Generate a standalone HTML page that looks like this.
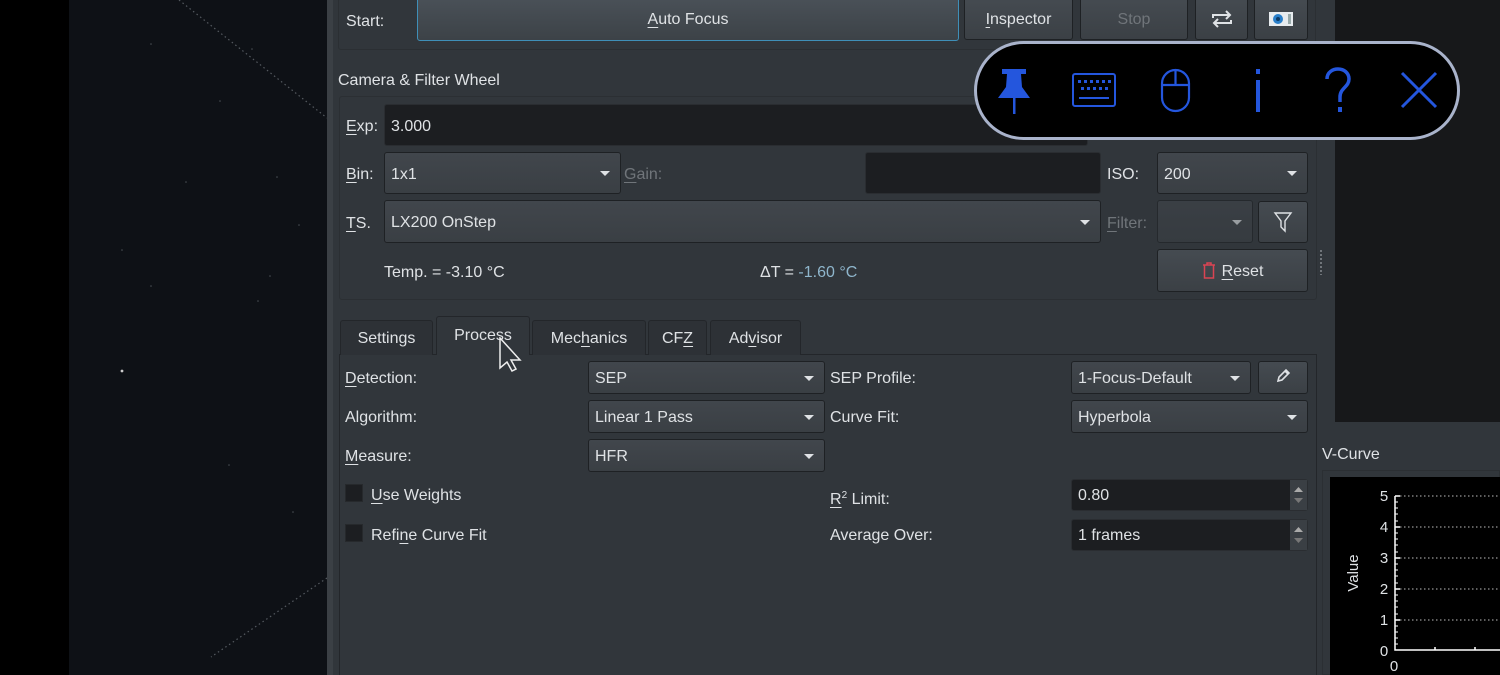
<!DOCTYPE html>
<html><head><meta charset="utf-8"><style>
*{box-sizing:border-box;margin:0;padding:0}
html,body{width:1500px;height:675px;overflow:hidden}
body{background:#000;font-family:"Liberation Sans",sans-serif;font-size:16px;color:#dfe2e5;position:relative}
.a{position:absolute}
.t{position:absolute;line-height:20px;white-space:nowrap;padding-top:2px}
.btn{position:absolute;border:1px solid #1e2124;border-radius:3px;background:linear-gradient(#454b51,#3b4045);text-align:center;line-height:44px}
.cb{position:absolute;border:1px solid #1e2124;border-radius:3px;background:linear-gradient(#41464c,#3a3f44);padding-left:6px;line-height:33px}
.cb::after{content:"";position:absolute;right:10px;top:50%;margin-top:-2px;border-left:5px solid transparent;border-right:5px solid transparent;border-top:5px solid #dfe2e5}
.in{position:absolute;background:#1c1e21;border:1px solid #2a2d31;border-radius:3px;padding-left:6px}
.u{text-decoration:underline;text-underline-offset:3px}
.dis{color:#70757a}
.tab{position:absolute;top:320px;height:35px;border:1px solid #23262a;border-bottom:none;border-radius:3px 3px 0 0;background:#2d3136;text-align:center;line-height:36px}
.chk{position:absolute;width:18px;height:18px;background:#1c1e21;border:1px solid #26292c}
</style></head><body>
<div class="a" style="left:69px;top:0;width:258px;height:675px;background:#0e1116"></div>
<svg class="a" style="left:69px;top:0" width="258" height="675">
<line x1="110" y1="0" x2="258" y2="118" stroke="#555a60" stroke-width="1.2" stroke-dasharray="1.5 3"/>
<line x1="258" y1="443" x2="142" y2="522" stroke="#555a60" stroke-width="1.2" stroke-dasharray="1.5 3" transform="translate(0,135)"/>
<g fill="#4a4f55"><circle cx="82" cy="44" r="0.8"/><circle cx="151" cy="101" r="0.8"/><circle cx="117" cy="182" r="0.8"/><circle cx="208" cy="177" r="0.8"/><circle cx="230" cy="225" r="0.8"/><circle cx="53" cy="250" r="0.8"/><circle cx="82" cy="286" r="0.8"/><circle cx="201" cy="276" r="0.8"/><circle cx="189" cy="301" r="0.8"/><circle cx="160" cy="465" r="0.8"/><circle cx="224" cy="512" r="0.8"/><circle cx="183" cy="49" r="0.8"/></g>
<circle cx="53" cy="371" r="1.4" fill="#ccc"/>
</svg>
<div class="a" style="left:327px;top:0;width:1008px;height:675px;background:#31363b"></div>
<div class="a" style="left:327px;top:0;width:6px;height:675px;background:#3b4045"></div>
<div class="a" style="left:1335px;top:0;width:165px;height:422px;background:#17181a"></div>
<div class="a" style="left:1316px;top:422px;width:184px;height:253px;background:#31363b"></div>

<div class="a" style="left:338px;top:-2px;width:978px;height:52px;border:1px solid #2b2f33;border-radius:3px"></div>
<div class="t" style="left:346px;top:10px">Start:</div>
<div class="btn" style="left:417px;top:-3px;width:542px;height:44px;border:1px solid #3f8fb8;background:linear-gradient(#4a5158,#3c4247)"><span class="u">A</span>uto Focus</div>
<div class="btn" style="left:964px;top:-3px;width:109px;height:43px"><span class="u">I</span>nspector</div>
<div class="btn dis" style="left:1080px;top:-3px;width:108px;height:43px">Stop</div>
<div class="btn" style="left:1195px;top:-3px;width:53px;height:43px"><svg width="26" height="20" viewBox="0 0 26 20" style="margin-top:11px;vertical-align:top"><path d="M4 9V6h17M17 2l4 4-4 4M22 11v3H5M9 18l-4-4 4-4" fill="none" stroke="#dfe2e5" stroke-width="2"/></svg></div>
<div class="btn" style="left:1254px;top:-3px;width:54px;height:43px"><svg width="26" height="18" viewBox="0 0 26 18" style="margin-top:12px;vertical-align:top"><rect x="1" y="2" width="24" height="14" fill="#e8ecef"/><circle cx="10" cy="9" r="5" fill="#2a7fc9"/><circle cx="10" cy="9" r="2" fill="#0b3a66"/><rect x="20" y="4" width="3" height="10" fill="#9aa"/></svg></div>

<div class="t" style="left:338px;top:69px">Camera &amp; Filter Wheel</div>
<div class="a" style="left:339px;top:96px;width:978px;height:204px;border:1px solid #2b2f33;border-radius:3px"></div>
<div class="t" style="left:346px;top:115px"><span class="u">E</span>xp:</div>
<div class="in" style="left:384px;top:104px;width:704px;height:42px;line-height:43px">3.000</div>
<div class="t" style="left:346px;top:163px"><span class="u">B</span>in:</div>
<div class="cb" style="left:384px;top:152px;width:237px;height:42px;line-height:43px">1x1</div>
<div class="t dis" style="left:624px;top:163px"><span class="u">G</span>ain:</div>
<div class="in" style="left:865px;top:152px;width:236px;height:42px"></div>
<div class="t" style="left:1107px;top:163px">ISO:</div>
<div class="cb" style="left:1157px;top:152px;width:151px;height:42px;line-height:43px">200</div>
<div class="t" style="left:346px;top:212px"><span class="u">T</span>S.</div>
<div class="cb" style="left:384px;top:200px;width:717px;height:43px;line-height:44px">LX200 OnStep</div>
<div class="t dis" style="left:1107px;top:212px"><span class="u">F</span>ilter:</div>
<div class="cb" style="left:1157px;top:200px;width:96px;height:43px;opacity:.6"></div>
<div class="btn" style="left:1258px;top:201px;width:50px;height:42px"><svg width="20" height="22" viewBox="0 0 20 22" style="margin-top:9px;vertical-align:top"><path d="M2 2h16l-6 8v10l-4-4v-6z" fill="none" stroke="#dfe2e5" stroke-width="1.4"/></svg></div>
<div class="t" style="left:384px;top:261px">Temp. = -3.10 °C</div>
<div class="t" style="left:760px;top:261px">ΔT = <span style="color:#8fb6cc">-1.60 °C</span></div>
<div class="btn" style="left:1157px;top:249px;width:151px;height:43px"><svg width="14" height="18" viewBox="0 0 14 18" style="vertical-align:-3px;margin-right:6px"><path d="M1 4h12M5 4V2h4v2M2.5 4v13h9V4" fill="none" stroke="#da4453" stroke-width="1.5"/></svg><span class="u">R</span>eset</div>
<div class="a" style="left:1320px;top:250px;width:2px;height:25px;background:repeating-linear-gradient(#70757a 0 2px,transparent 2px 4px)"></div>

<div class="a" style="left:339px;top:354px;width:978px;height:321px;border:1px solid #23262a;border-bottom:none;background:#31363b"></div>
<div class="tab" style="left:340px;width:93px">Settings</div>
<div class="tab" style="left:436px;top:316px;width:94px;height:39px;background:#31363b;line-height:38px">Process</div>
<div class="tab" style="left:532px;width:114px">Mec<span class="u">h</span>anics</div>
<div class="tab" style="left:648px;width:59px">CF<span class="u">Z</span></div>
<div class="tab" style="left:710px;width:91px">Ad<span class="u">v</span>isor</div>
<svg class="a" style="left:498px;top:337px" width="26" height="38" viewBox="0 0 26 38"><path d="M2 1v30l7-6 5 9 4-2-5-9h9z" fill="#31363b" stroke="#eee" stroke-width="1.5"/></svg>

<div class="t" style="left:345px;top:367px"><span class="u">D</span>etection:</div>
<div class="cb" style="left:588px;top:361px;width:237px;height:33px">SEP</div>
<div class="t" style="left:830px;top:367px">SEP Profile:</div>
<div class="cb" style="left:1071px;top:361px;width:180px;height:33px">1-Focus-Default</div>
<div class="btn" style="left:1258px;top:361px;width:50px;height:33px;line-height:30px"><svg width="16" height="16" viewBox="0 0 16 16" style="vertical-align:-3px"><path d="M3 13l1-4 7-7 3 3-7 7zM10 3l3 3" fill="none" stroke="#dfe2e5" stroke-width="1.6"/></svg></div>
<div class="t" style="left:345px;top:406px">Algorithm:</div>
<div class="cb" style="left:588px;top:400px;width:237px;height:33px">Linear 1 Pass</div>
<div class="t" style="left:830px;top:406px">Curve Fit:</div>
<div class="cb" style="left:1071px;top:400px;width:237px;height:33px">Hyperbola</div>
<div class="t" style="left:345px;top:445px"><span class="u">M</span>easure:</div>
<div class="cb" style="left:588px;top:439px;width:237px;height:33px">HFR</div>
<div class="chk" style="left:345px;top:484px"></div>
<div class="t" style="left:371px;top:484px"><span class="u">U</span>se Weights</div>
<div class="t" style="left:830px;top:484px"><span class="u">R</span><span style="font-size:10px;vertical-align:6px">2</span> Limit:</div>
<div class="in" style="left:1071px;top:479px;width:237px;height:32px;line-height:32px">0.80</div>
<div class="chk" style="left:345px;top:524px"></div>
<div class="t" style="left:371px;top:524px">Refi<span class="u">n</span>e Curve Fit</div>
<div class="t" style="left:830px;top:524px">Average Over:</div>
<div class="in" style="left:1071px;top:519px;width:237px;height:32px;line-height:32px">1 frames</div>
<svg class="a" style="left:1290px;top:480px" width="17" height="30"><rect width="17" height="30" fill="#3a3f44"/><path d="M4 12l4.5-5 4.5 5z" fill="#aaa"/><path d="M4 18l4.5 5 4.5-5z" fill="#777"/></svg>
<svg class="a" style="left:1290px;top:520px" width="17" height="30"><rect width="17" height="30" fill="#3a3f44"/><path d="M4 12l4.5-5 4.5 5z" fill="#aaa"/><path d="M4 18l4.5 5 4.5-5z" fill="#777"/></svg>

<div class="t" style="left:1322px;top:443px">V-Curve</div>
<div class="a" style="left:1322px;top:470px;width:178px;height:205px;border:1px solid #2b2f33"></div>
<svg class="a" style="left:1330px;top:477px" width="170" height="198">
<rect width="170" height="198" fill="#000"/>
<text x="28" y="96" fill="#dfe2e5" font-size="15" font-family="Liberation Sans" transform="rotate(-90 28 96)" text-anchor="middle">Value</text>
<g fill="#dfe2e5" font-size="15" font-family="Liberation Sans" text-anchor="middle">
<text x="54" y="24">5</text><text x="54" y="55">4</text><text x="54" y="86">3</text><text x="54" y="117">2</text><text x="54" y="148">1</text><text x="54" y="179">0</text><text x="64" y="194">0</text></g>
<path d="M65 19V173H170" stroke="#fff" stroke-width="1.5" fill="none"/>
<g stroke="#bbb" stroke-dasharray="1.5 2.5"><line x1="66" y1="19" x2="170" y2="19"/><line x1="66" y1="50" x2="170" y2="50"/><line x1="66" y1="81" x2="170" y2="81"/><line x1="66" y1="112" x2="170" y2="112"/><line x1="66" y1="143" x2="170" y2="143"/></g>
<path d="M65 19h5M65 50h5M65 81h5M65 112h5M65 143h5M105 173v-3M145 173v-3" stroke="#fff" stroke-width="1.5"/>
<path d="M65 25h3M65 31h3M65 37h3M65 44h3M65 56h3M65 62h3M65 68h3M65 75h3M65 87h3M65 93h3M65 99h3M65 106h3M65 118h3M65 124h3M65 130h3M65 137h3M65 149h3M65 155h3M65 161h3M65 167h3" stroke="#fff"/>
</svg>

<div class="a" style="left:974px;top:41px;width:486px;height:99px;border:3px solid #a9b3cb;border-radius:50px;background:#000"></div>
<svg class="a" style="left:974px;top:41px" width="486" height="99">
<g fill="#2456dd"><path d="M28 28h24v5h-5l1 13 8 11H24l8-11 1-13h-5z"/><rect x="39" y="57" width="2.5" height="16"/></g>
<g stroke="#2456dd" fill="none" stroke-width="2"><rect x="99" y="33" width="42" height="32" rx="2"/><path d="M105 57h30"/></g>
<g fill="#2456dd"><rect x="104" y="39" width="3" height="3"/><rect x="110" y="39" width="3" height="3"/><rect x="116" y="39" width="3" height="3"/><rect x="122" y="39" width="3" height="3"/><rect x="128" y="39" width="3" height="3"/><rect x="134" y="39" width="3" height="3"/><rect x="107" y="46" width="3" height="3"/><rect x="113" y="46" width="3" height="3"/><rect x="119" y="46" width="3" height="3"/><rect x="125" y="46" width="3" height="3"/><rect x="131" y="46" width="3" height="3"/></g>
<g stroke="#2456dd" fill="none" stroke-width="2.2"><rect x="188" y="29" width="27" height="41" rx="13.5"/><path d="M201.5 29v15M188 44h27"/></g>
<rect x="282" y="28" width="4" height="5" fill="#2456dd"/><rect x="282" y="39" width="4" height="32" fill="#2456dd"/>
<path d="M353 38c0-7 6-10 11-10 6 0 11 4 11 10 0 8-9 9-9 18v5" stroke="#2456dd" stroke-width="3.5" fill="none"/><rect x="364" y="66" width="4" height="5" fill="#2456dd"/>
<path d="M428 32l34 34M462 32l-34 34" stroke="#2456dd" stroke-width="3"/>
</svg>
</body></html>
